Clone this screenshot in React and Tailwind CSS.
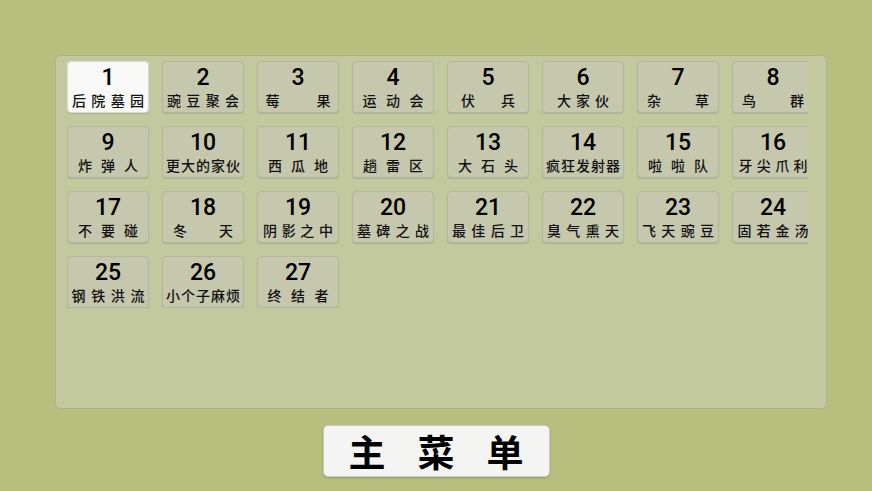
import React from "react";

// label text + the width its characters spread over
const LEVELS = [
  ["后院墓园", 72], ["豌豆聚会", 72], ["莓果", 65], ["运动会", 61], ["伏兵", 54], ["大家伙", 52], ["杂草", 62], ["鸟群", 62],
  ["炸弹人", 60], ["更大的家伙", 74], ["西瓜地", 60], ["趟雷区", 60], ["大石头", 60], ["疯狂发射器", 74], ["啦啦队", 60], ["牙尖爪利", 69],
  ["不要碰", 60], ["冬天", 60], ["阴影之中", 70], ["墓碑之战", 72], ["最佳后卫", 72], ["臭气熏天", 72], ["飞天豌豆", 72], ["固若金汤", 71],
  ["钢铁洪流", 73], ["小个子麻烦", 74], ["终结者", 61],
];

const LevelButton = ({ num, label, width, active }) => {
  return (
    <button
      className={
        "flex h-[52px] w-[82px] shrink-0 flex-col items-center rounded-[4px] border pt-[2px] shadow-[0_1px_1px_rgba(0,0,0,0.12)] " +
        (active ? "border-[#d9dbd0] bg-[#f8f8f6]" : "border-[#b3b79c] bg-[#c6c8ae]")
      }
    >
      <span className="font-['Roboto',sans-serif] text-[23px] font-medium leading-[27px] text-black">{num}</span>
      <span
        className="flex justify-between font-['Noto_Sans_CJK_SC',sans-serif] text-[14px] font-medium leading-[18px] text-[#111]"
        style={{ width }}
      >
        {label.split("").map((ch, i) => (
          <span key={i}>{ch}</span>
        ))}
      </span>
    </button>
  );
};

const App = () => {
  return (
    <div className="flex h-[491px] w-[872px] flex-col items-center bg-[#b6bf7d] pt-[55px]">
      <div className="ml-[55px] h-[354px] w-[772px] self-start rounded-[5px] border border-[#adb586] bg-[#c3c99f] pl-[11px] pt-[5px]">
        <div className="w-[741px] overflow-hidden">
          <div className="grid w-[760px] grid-cols-[repeat(8,82px)] gap-x-[13px] gap-y-[13px]">
            {LEVELS.map(([label, width], i) => (
              <LevelButton key={i} num={i + 1} label={label} width={width} active={i === 0} />
            ))}
          </div>
        </div>
      </div>
      <button className="mt-[16px] flex h-[52px] w-[227px] items-center justify-center gap-[32px] rounded-[5px] border border-[#c9cbbf] bg-[#f4f4f2] shadow-[0_1px_2px_rgba(0,0,0,0.2)] font-['Noto_Sans_CJK_SC',sans-serif] text-[37px] font-bold leading-none text-black">
        <span>主</span>
        <span>菜</span>
        <span>单</span>
      </button>
    </div>
  );
};

export default App;
